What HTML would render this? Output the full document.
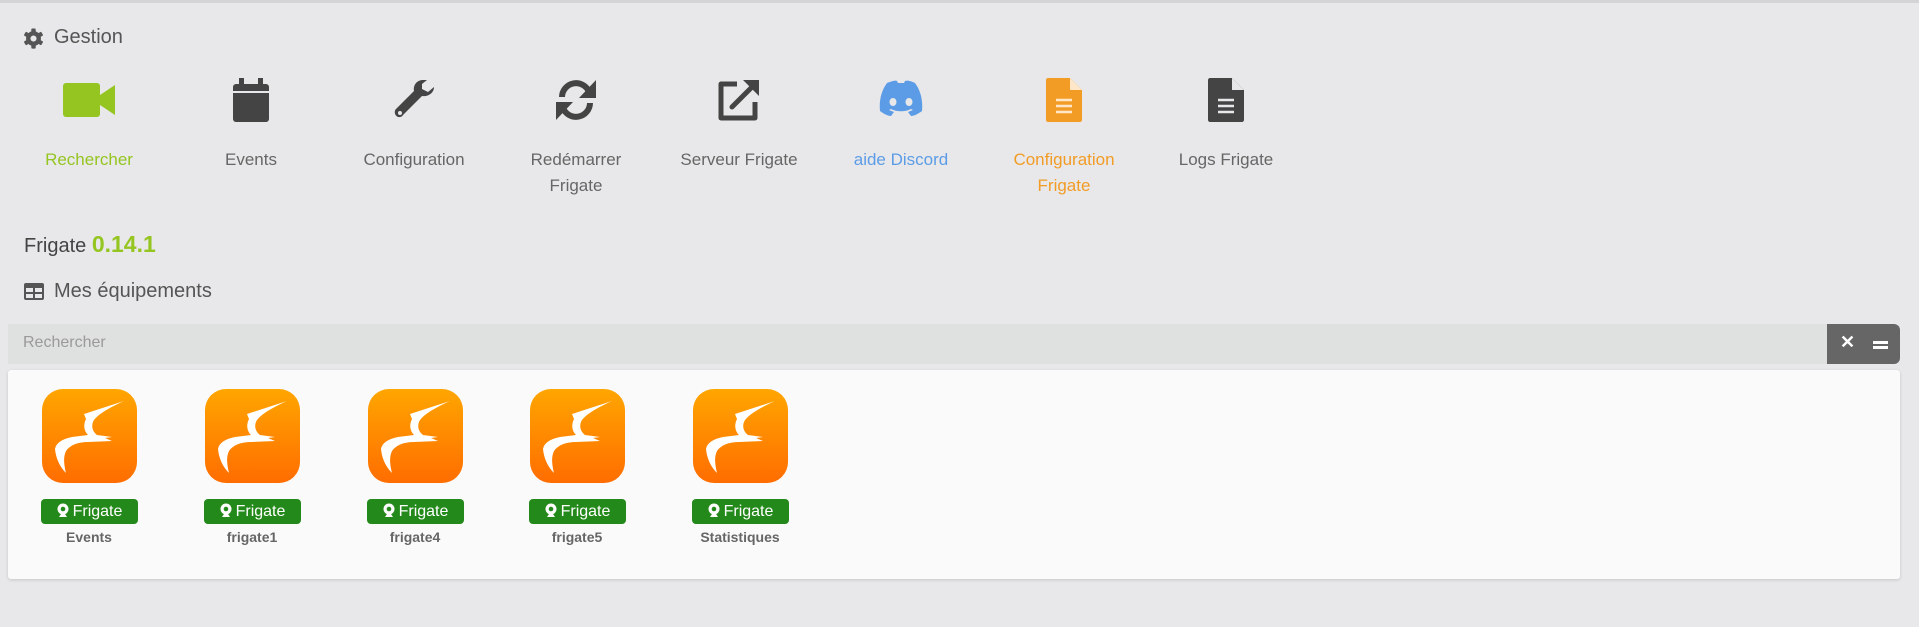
<!DOCTYPE html>
<html><head><meta charset="utf-8"><style>
*{box-sizing:border-box;margin:0;padding:0}
body{width:1919px;height:627px;background:#e8e8ea;font-family:"Liberation Sans",sans-serif;position:relative;overflow:hidden;color:#555}
.topline{position:absolute;left:0;top:0;width:1919px;height:3px;background:#d4d4d6}
.abs{position:absolute}
.tool{position:absolute;top:78px;width:150px;text-align:center;font-size:17px;line-height:26px;color:#666}
.tool svg{display:block;margin:0 auto 25px;height:44px}
.card{position:absolute;top:389px;width:120px;text-align:center}
.ico{width:95px;height:94px;border-radius:21px;background:linear-gradient(#ffa600,#ff6d00);margin:0 auto}
.badge{margin:16px auto 0;width:97px;height:25px;background:#23891a;border-radius:4px;color:#fff;font-size:16px;line-height:25px}
.badge svg{vertical-align:-2px;margin-right:3px}
.name{font-size:14px;font-weight:bold;color:#666;margin-top:5px}
</style></head><body>
<div class="topline"></div>
<svg class="abs" style="left:23px;top:28px" width="21" height="21" viewBox="0 0 24 24"><g fill="#555"><circle cx="12" cy="12" r="8.5"/><rect x="9.5" y="0.5" width="5" height="23" rx="1"/><rect x="9.5" y="0.5" width="5" height="23" rx="1" transform="rotate(60 12 12)"/><rect x="9.5" y="0.5" width="5" height="23" rx="1" transform="rotate(120 12 12)"/></g><circle cx="12" cy="12" r="3.5" fill="#e8e8ea"/></svg>
<div class="abs" style="left:54px;top:26px;font-size:20px;color:#555">Gestion</div>

<div class="tool" style="left:14px;color:#95c521"><svg viewBox="0 0 56 44" width="56"><rect x="2" y="5" width="37" height="34" rx="3" fill="#95c521"/><path d="M39 17l15-10v30L39 27z" fill="#95c521"/></svg>Rechercher</div>
<div class="tool" style="left:176px"><svg viewBox="0 0 44 44" width="44"><rect x="10" y="0" width="5" height="9" fill="#444"/><rect x="29" y="0" width="5" height="9" fill="#444"/><rect x="4" y="6" width="36" height="38" rx="3" fill="#444"/><rect x="4" y="13" width="36" height="2" fill="#e8e8ea"/></svg>Events</div>
<div class="tool" style="left:339px"><svg viewBox="0 0 44 44" width="44"><path fill="#444" d="M31 2c-6 0-10 5-9 11L4 31c-3 3 0 9 4 8 2 0 3-2 4-3l18-18c6 1 12-3 12-9l-6 5-6-3V6l5-4zM8 33a2 2 0 110 4 2 2 0 010-4z"/></svg>Configuration</div>
<div class="tool" style="left:501px"><svg viewBox="0 0 44 44" width="44"><path fill="none" stroke="#444" stroke-width="6" d="M8 19a14 14 0 0127-5M36 25a14 14 0 01-27 5"/><path fill="#444" d="M42 2v18H25zM2 42V24h17z"/></svg>Redémarrer<br>Frigate</div>
<div class="tool" style="left:664px"><svg viewBox="0 0 44 44" width="44"><path fill="none" stroke="#444" stroke-width="5" d="M20 6H4v34h34V24" stroke-linejoin="round"/><path stroke="#444" stroke-width="5" d="M15 29L38 6" stroke-linecap="round"/><path fill="#444" d="M26 2h16v16z"/></svg>Serveur Frigate</div>
<div class="tool" style="left:826px;color:#5c9ce6"><svg viewBox="0 0 56 44" width="56"><path fill="#5c9ce6" d="M14 5c5-2 9-3 10-2l1 2h6l1-2c2-1 6 0 10 2 6 8 8 18 7 28-4 3-8 5-11 5l-3-4 5-2-2-1c-6 3-14 3-20 0l-2 1 5 2-3 4c-3 0-7-2-11-5C6 23 8 13 14 5zm6 15a3.5 4 0 100 8 3.5 4 0 000-8zm16 0a3.5 4 0 100 8 3.5 4 0 000-8z"/></svg>aide Discord</div>
<div class="tool" style="left:989px;color:#f29c26"><svg viewBox="0 0 44 44" width="44"><path fill="#f29c26" d="M6 0h22l12 12v30c0 1-1 2-2 2H6c-1 0-2-1-2-2V2c0-1 1-2 2-2z"/><path fill="#fde7c8" d="M28 0v12h12z"/><path stroke="#fde7c8" stroke-width="2.5" d="M14 22h16M14 28h16M14 34h16"/></svg>Configuration<br>Frigate</div>
<div class="tool" style="left:1151px"><svg viewBox="0 0 44 44" width="44"><path fill="#444" d="M6 0h22l12 12v30c0 1-1 2-2 2H6c-1 0-2-1-2-2V2c0-1 1-2 2-2z"/><path fill="#e8e8ea" d="M28 0v12h12z"/><path stroke="#e8e8ea" stroke-width="2.5" d="M14 22h16M14 28h16M14 34h16"/></svg>Logs Frigate</div>

<div class="abs" style="left:24px;top:231px;font-size:20px;color:#444">Frigate <span style="color:#95c521;font-weight:bold;font-size:23px">0.14.1</span></div>
<svg class="abs" style="left:24px;top:283px" width="20" height="17" viewBox="0 0 20 17"><rect width="20" height="17" rx="2" fill="#555"/><rect x="2" y="5" width="7" height="4" fill="#e8e8ea"/><rect x="11" y="5" width="7" height="4" fill="#e8e8ea"/><rect x="2" y="11" width="7" height="4" fill="#e8e8ea"/><rect x="11" y="11" width="7" height="4" fill="#e8e8ea"/></svg>
<div class="abs" style="left:54px;top:280px;font-size:20px;color:#555">Mes équipements</div>

<div class="abs" style="left:8px;top:324px;width:1820px;height:40px;background:#dfe0e0"></div>
<div class="abs" style="left:23px;top:334px;font-size:16px;color:#9a9a9a">Rechercher</div>
<div class="abs" style="left:1827px;top:324px;width:73px;height:40px;background:#666;border-radius:0 6px 6px 0"></div>
<div class="abs" style="left:1840px;top:332px;color:#fff;font-size:18px;font-weight:bold">✕</div>
<div class="abs" style="left:1873px;top:341px;width:15px;height:3px;background:#fff"></div>
<div class="abs" style="left:1873px;top:346px;width:15px;height:3px;background:#fff"></div>

<div class="abs" style="left:8px;top:370px;width:1892px;height:209px;background:#fafafa;border-radius:3px;box-shadow:0 1px 3px rgba(0,0,0,.15)"></div>

<svg width="0" height="0" style="position:absolute"><defs>
<path id="bird" fill="#fff" d="M82 12L42 25L44 30C41 36 42 42 46 46L30 48C20 50 14 54 13 60C14 70 18 78 24 84C22 76 21 68 24 62C28 56 36 53 46 53L70 52L63 49L70 48L55 46C51 43 49 38 51 33C53 28 62 21 82 12Z"/>
<g id="cam"><circle cx="7" cy="6" r="5.5" fill="#fff"/><circle cx="7" cy="6" r="2.3" fill="#23891a"/><path d="M3 14h8l-2-3H5z" fill="#fff"/></g>
</defs></svg>

<div class="card" style="left:29px"><div class="ico"><svg viewBox="0 0 95 94" width="95" height="94"><use href="#bird"/></svg></div><div class="badge"><svg width="14" height="15" viewBox="0 0 14 15"><use href="#cam"/></svg>Frigate</div><div class="name">Events</div></div>
<div class="card" style="left:192px"><div class="ico"><svg viewBox="0 0 95 94" width="95" height="94"><use href="#bird"/></svg></div><div class="badge"><svg width="14" height="15" viewBox="0 0 14 15"><use href="#cam"/></svg>Frigate</div><div class="name">frigate1</div></div>
<div class="card" style="left:355px"><div class="ico"><svg viewBox="0 0 95 94" width="95" height="94"><use href="#bird"/></svg></div><div class="badge"><svg width="14" height="15" viewBox="0 0 14 15"><use href="#cam"/></svg>Frigate</div><div class="name">frigate4</div></div>
<div class="card" style="left:517px"><div class="ico"><svg viewBox="0 0 95 94" width="95" height="94"><use href="#bird"/></svg></div><div class="badge"><svg width="14" height="15" viewBox="0 0 14 15"><use href="#cam"/></svg>Frigate</div><div class="name">frigate5</div></div>
<div class="card" style="left:680px"><div class="ico"><svg viewBox="0 0 95 94" width="95" height="94"><use href="#bird"/></svg></div><div class="badge"><svg width="14" height="15" viewBox="0 0 14 15"><use href="#cam"/></svg>Frigate</div><div class="name">Statistiques</div></div>
</body></html>
